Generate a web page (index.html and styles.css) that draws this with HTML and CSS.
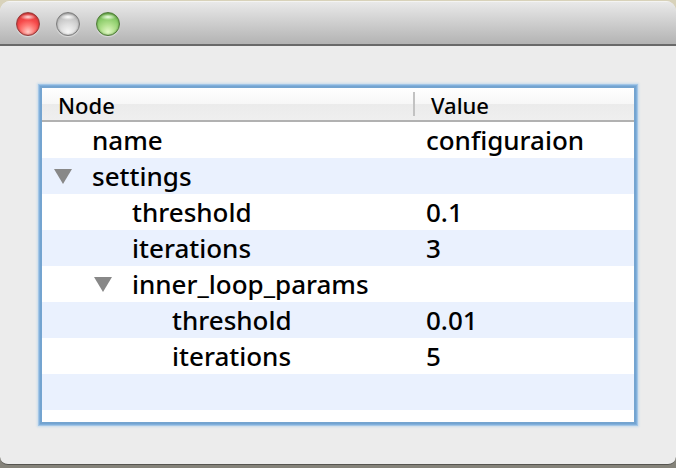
FILE: index.html
```html
<!DOCTYPE html>
<html lang="en">
<head>
<meta charset="utf-8">
<title>Configuration</title>
<link rel="stylesheet" href="styles.css">
</head>
<body>
<div class="window">
  <header class="titlebar">
    <button class="light light-close" type="button" aria-label="Close"></button>
    <button class="light light-minimize" type="button" aria-label="Minimize"></button>
    <button class="light light-zoom" type="button" aria-label="Zoom"></button>
  </header>
  <main class="content">
    <div class="tree">
      <table class="table">
        <thead>
          <tr><th class="node-head" scope="col">Node</th><th class="value-head" scope="col">Value</th></tr>
        </thead>
        <tbody>
          <tr><td><div class="node"><span class="toggle"></span>name</div></td><td class="value">configuraion</td></tr>
          <tr><td><div class="node"><button class="toggle" type="button" aria-label="Collapse settings" aria-expanded="true"><svg class="arrow" viewBox="0 0 18 15"><path d="M0 0H18L9 15Z"/></svg></button>settings</div></td><td class="value"></td></tr>
          <tr><td><div class="node level-1"><span class="toggle"></span>threshold</div></td><td class="value">0.1</td></tr>
          <tr><td><div class="node level-1"><span class="toggle"></span>iterations</div></td><td class="value">3</td></tr>
          <tr><td><div class="node level-1"><button class="toggle" type="button" aria-label="Collapse inner_loop_params" aria-expanded="true"><svg class="arrow" viewBox="0 0 18 15"><path d="M0 0H18L9 15Z"/></svg></button>inner_loop_params</div></td><td class="value"></td></tr>
          <tr><td><div class="node level-2"><span class="toggle"></span>threshold</div></td><td class="value">0.01</td></tr>
          <tr><td><div class="node level-2"><span class="toggle"></span>iterations</div></td><td class="value">5</td></tr>
        </tbody>
      </table>
    </div>
  </main>
</div>
</body>
</html>
```

FILE: styles.css
```css
* {
  box-sizing: border-box;
}

body {
  margin: 0;
  min-height: 100vh;
  padding: 1px 0 3px;
  display: flex;
  background: linear-gradient(#d8d2ba 0 50%, #85837a 50%);
  font-family: "Lucida Grande", "Noto Sans", sans-serif;
  color: #000;
}

.window {
  flex: 1;
  display: flex;
  flex-direction: column;
  background: #ececec;
  border-radius: 10px 10px 8px 8px;
  border-bottom: 1px solid #55544f;
  overflow: hidden;
}

.titlebar {
  display: flex;
  align-items: center;
  gap: 16px;
  height: 45px;
  padding: 2px 16px 0;
  background: linear-gradient(#e9e9e9, #b3b3b3);
  border-top: 1px solid #f4f4f2;
  border-bottom: 2px solid #696969;
}

.light {
  width: 24px;
  height: 24px;
  padding: 0;
  border: 1px solid;
  border-radius: 50%;
}

.light-close {
  border-color: #963b3b;
  background:
    radial-gradient(ellipse 8px 3px at 50% 4px, #ffdcdc, transparent),
    radial-gradient(circle at 50% 85%, #ffc9c4 0, #ff7d78 30%, #f64a4a 55%, #c93436 100%);
  box-shadow: inset 0 0 2px #a02a2a, 0 1px 1px #dedede;
}

.light-minimize {
  border-color: #7c7c7c;
  background:
    radial-gradient(ellipse 8px 3px at 50% 4px, #fff, transparent),
    radial-gradient(circle at 50% 85%, #f6f6f6 0, #dedede 35%, #c6c6c6 65%, #a0a0a0 100%);
  box-shadow: inset 0 0 2px #858585, 0 1px 1px #dedede;
}

.light-zoom {
  border-color: #4f7c38;
  background:
    radial-gradient(ellipse 8px 3px at 50% 4px, #effee5, transparent),
    radial-gradient(circle at 50% 85%, #e2f8c6 0, #b0e08c 35%, #88ca67 65%, #5c9840 100%);
  box-shadow: inset 0 0 2px #4f8137, 0 1px 1px #dedede;
}

.content {
  flex: 1;
  display: flex;
  padding: 42px;
}

.tree {
  flex: 1;
  background: repeating-linear-gradient(#fff 0 36px, #eaf1fe 36px 72px) 0 34px no-repeat #fff;
  box-shadow: 0 0 0 2px #74a4d0, 0 0 0 3px #81b0dc, 0 0 0 4px #a3c6e6, 0 0 2px 5px #c9dcec;
}

.table {
  width: 100%;
  table-layout: fixed;
  border-collapse: separate;
  border-spacing: 0;
}

th {
  height: 34px;
  padding: 2px 16px 0;
  border-bottom: 2px solid #b1b1b1;
  background: linear-gradient(#fff 0, #f7f7f7 50%, #ebebeb 50%, #efefef 100%);
  font-size: 22px;
  line-height: 30px;
  font-weight: 500;
  text-align: left;
}

.node-head {
  width: 63%;
  background:
    linear-gradient(#c2c2c2, #c2c2c2) right 4px / 2px 24px no-repeat,
    linear-gradient(#fff 0, #f7f7f7 50%, #ebebeb 50%, #efefef 100%);
}

td {
  height: 36px;
  padding: 0;
  font-size: 26px;
  line-height: 36px;
  font-weight: 500;
}

.node {
  display: flex;
  align-items: center;
  height: 36px;
  padding-left: 11px;
}

.level-1 {
  padding-left: 51px;
}

.level-2 {
  padding-left: 91px;
}

.toggle {
  display: flex;
  align-items: center;
  width: 39px;
  height: 36px;
  padding: 0;
  border: 0;
  background: none;
}

.arrow {
  width: 20px;
  height: 15px;
  fill: #888;
}

.value {
  padding-left: 11px;
}
```
